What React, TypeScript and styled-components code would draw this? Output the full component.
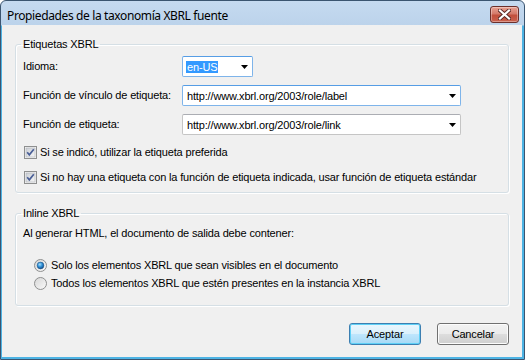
import React from 'react'
import styled, { createGlobalStyle } from 'styled-components'

const GlobalStyle = createGlobalStyle`
  html, body {
    margin: 0;
    padding: 0;
    background: #ffffff;
  }
  body {
    font-family: 'Liberation Sans', Arial, sans-serif;
    font-size: 11px;
    letter-spacing: -0.16px;
    color: #000;
  }
`

const Window = styled.div`
  width: 525px;
  height: 360px;
  box-sizing: border-box;
  border: 1px solid #3b5570;
  border-radius: 6px 6px 0 0;
  background: linear-gradient(to bottom, #c5daf0 0px, #bcd3eb 24px, #4db3e4 25px);
  display: flex;
  flex-direction: column;
  overflow: hidden;
`

const TitleBar = styled.div`
  height: 24px;
  flex: none;
  display: flex;
  align-items: center;
  justify-content: space-between;
  padding: 1px 5px 0 6px;
  box-sizing: border-box;
`

const Title = styled.span`
  font-family: 'Noto Sans', 'Open Sans', sans-serif;
  font-size: 12px;
  color: #000;
  letter-spacing: -0.38px;
  margin-top: 3px;
`

const CloseButton = styled.div`
  width: 29px;
  height: 17px;
  box-sizing: border-box;
  border: 1px solid #6b2f2b;
  border-radius: 3px;
  background: linear-gradient(to bottom, #e8a193 0%, #d47a6a 45%, #c24f3c 55%, #c9614d 100%);
  box-shadow: inset 0 0 0 1px rgba(255, 255, 255, 0.35);
  display: flex;
  align-items: center;
  justify-content: center;
  margin-top: 1px;
`

const Client = styled.div`
  flex: 1;
  background: #f0f0f0;
  margin: 0 2px 2px 1px;
  padding: 13px 13px 12px 13px;
  display: flex;
  flex-direction: column;
`

const Group = styled.fieldset<{ $height: number }>`
  margin: 0;
  height: ${p => p.$height}px;
  box-sizing: border-box;
  border: 1px solid #d5dfe5;
  border-radius: 3px;
  box-shadow: 1px 1px 0 #ffffff, inset 1px 1px 0 #ffffff;
  padding: 5px 7px 0 7px;
  min-width: 0;
  display: flex;
  flex-direction: column;
`

const Legend = styled.legend`
  padding: 0 2px;
  margin-left: -2px;
  line-height: 13px;
  font-size: 11px;
`

const FieldGrid = styled.div`
  display: grid;
  grid-template-columns: 159px auto;
  grid-auto-rows: 21px;
  row-gap: 8px;
  align-items: center;
`

const FieldLabel = styled.span`
  line-height: 13px;
`

const Combo = styled.div<{ $width: number; $hot?: boolean }>`
  width: ${p => p.$width}px;
  height: 21px;
  box-sizing: border-box;
  background: #fff;
  border: 1px solid ${p => (p.$hot ? '#7eb4ea' : '#c5c5c5')};
  border-top-color: ${p => (p.$hot ? '#569de5' : '#abadb3')};
  border-radius: 2px;
  display: flex;
  align-items: center;
  padding: 0 4px 0 3px;
  justify-content: space-between;
`

const ComboText = styled.span<{ $selected?: boolean }>`
  line-height: 12px;
  padding: 0 1px;
  background: ${p => (p.$selected ? '#3399ff' : 'transparent')};
  color: ${p => (p.$selected ? '#fff' : '#000')};
`

const CheckList = styled.div`
  margin-top: 9px;
  display: flex;
  flex-direction: column;
  gap: 9px;
`

const OptionRow = styled.label<{ $indent?: number; $gap: number }>`
  height: 16px;
  display: flex;
  align-items: center;
  gap: ${p => p.$gap}px;
  padding-left: ${p => p.$indent ?? 0}px;
`

const Paragraph = styled.div`
  height: 16px;
  display: flex;
  align-items: center;
`

const RadioList = styled.div`
  margin-top: 16px;
  display: flex;
  flex-direction: column;
  gap: 2px;
`

const Spacer = styled.div<{ $h: number }>`
  height: ${p => p.$h}px;
  flex: none;
`

const Footer = styled.div`
  margin-top: 17px;
  display: flex;
  justify-content: flex-end;
  gap: 16px;
`

const Button = styled.div<{ $default?: boolean }>`
  width: 72px;
  height: 22px;
  box-sizing: border-box;
  border: 1px solid ${p => (p.$default ? '#3c7fb1' : '#707070')};
  border-radius: 3px;
  background: ${p =>
    p.$default
      ? 'linear-gradient(to bottom, #eaf6fd 0%, #d9f0fc 50%, #bee6fd 51%, #a7d9f5 100%)'
      : 'linear-gradient(to bottom, #f2f2f2 0%, #ebebeb 50%, #dddddd 51%, #cfcfcf 100%)'};
  box-shadow: ${p => (p.$default ? 'inset 0 0 0 1px #5fd0f6' : 'inset 0 0 0 1px #fcfcfc')};
  display: flex;
  align-items: center;
  justify-content: center;
`

const Arrow = () => (
  <svg width="7" height="4" viewBox="0 0 7 4">
    <path d="M0 0 H7 L3.5 4 Z" fill="#000" />
  </svg>
)

const CheckBox = () => (
  <svg width="13" height="13" viewBox="0 0 13 13" style={{ flex: 'none', marginLeft: 1 }}>
    <defs>
      <linearGradient id="cbg" x1="0" y1="0" x2="1" y2="1">
        <stop offset="0" stopColor="#cbcfd5" />
        <stop offset="1" stopColor="#f6f6f6" />
      </linearGradient>
    </defs>
    <rect x="0.5" y="0.5" width="12" height="12" fill="#f4f4f4" stroke="#8e8f8f" />
    <rect x="2" y="2" width="9" height="9" fill="url(#cbg)" stroke="#aeb3b9" strokeWidth="0.6" />
    <path d="M3.2 6.3 L5.3 8.8 L9.8 3.2" fill="none" stroke="#4a5f97" strokeWidth="1.7" />
  </svg>
)

const Radio = ({ checked }: { checked?: boolean }) => (
  <svg width="13" height="13" viewBox="0 0 13 13" style={{ flex: 'none' }}>
    <defs>
      <linearGradient id="rbg" x1="0" y1="0" x2="1" y2="1">
        <stop offset="0" stopColor="#d5d5d5" />
        <stop offset="1" stopColor="#fbfbfb" />
      </linearGradient>
      <radialGradient id="rdot" cx="0.4" cy="0.35" r="0.7">
        <stop offset="0" stopColor="#a9e0fb" />
        <stop offset="0.5" stopColor="#2c8ed6" />
        <stop offset="1" stopColor="#12467f" />
      </radialGradient>
    </defs>
    <circle cx="6.5" cy="6.5" r="6" fill="url(#rbg)" stroke="#8e8f8f" />
    {checked && <circle cx="6.5" cy="6.5" r="3.4" fill="url(#rdot)" stroke="#1c5180" strokeWidth="0.5" />}
  </svg>
)

const CloseGlyph = () => (
  <svg width="13" height="11" viewBox="0 0 13 11">
    <path d="M2 1.5 L11 9.5 M11 1.5 L2 9.5" stroke="#5a2a26" strokeWidth="4" strokeLinecap="square" />
    <path d="M2 1.5 L11 9.5 M11 1.5 L2 9.5" stroke="#ffffff" strokeWidth="2.2" strokeLinecap="square" />
  </svg>
)

export default function App() {
  return (
    <>
      <GlobalStyle />
      <Window>
        <TitleBar>
          <Title>Propiedades de la taxonomía XBRL fuente</Title>
          <CloseButton>
            <CloseGlyph />
          </CloseButton>
        </TitleBar>
        <Client>
          <Group $height={155}>
            <Legend>Etiquetas XBRL</Legend>
            <FieldGrid>
              <FieldLabel>Idioma:</FieldLabel>
              <Combo $width={71} $hot>
                <ComboText $selected>en-US</ComboText>
                <Arrow />
              </Combo>
              <FieldLabel>Función de vínculo de etiqueta:</FieldLabel>
              <Combo $width={279} $hot>
                <ComboText>http://www.xbrl.org/2003/role/label</ComboText>
                <Arrow />
              </Combo>
              <FieldLabel>Función de etiqueta:</FieldLabel>
              <Combo $width={279}>
                <ComboText>http://www.xbrl.org/2003/role/link</ComboText>
                <Arrow />
              </Combo>
            </FieldGrid>
            <CheckList>
              <OptionRow $gap={3}>
                <CheckBox />
                <span>Si se indicó, utilizar la etiqueta preferida</span>
              </OptionRow>
              <OptionRow $gap={3}>
                <CheckBox />
                <span>Si no hay una etiqueta con la función de etiqueta indicada, usar función de etiqueta estándar</span>
              </OptionRow>
            </CheckList>
          </Group>
          <Spacer $h={14} />
          <Group $height={99}>
            <Legend>Inline XBRL</Legend>
            <Paragraph>Al generar HTML, el documento de salida debe contener:</Paragraph>
            <RadioList>
              <OptionRow $indent={11} $gap={4}>
                <Radio checked />
                <span>Solo los elementos XBRL que sean visibles en el documento</span>
              </OptionRow>
              <OptionRow $indent={11} $gap={4}>
                <Radio />
                <span>Todos los elementos XBRL que estén presentes en la instancia XBRL</span>
              </OptionRow>
            </RadioList>
          </Group>
          <Footer>
            <Button $default>Aceptar</Button>
            <Button>Cancelar</Button>
          </Footer>
        </Client>
      </Window>
    </>
  )
}
